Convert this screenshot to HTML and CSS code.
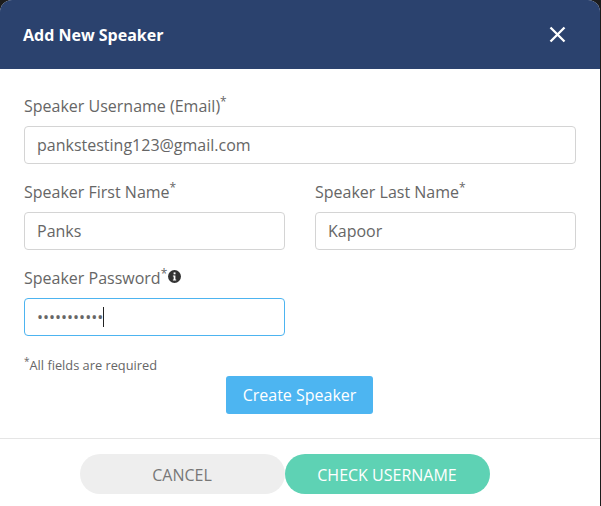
FILE: index.html
```html
<!DOCTYPE html>
<html lang="en">
<head>
    <meta charset="UTF-8">
    <meta name="viewport" content="width=device-width,initial-scale=1.0">
    <title>Add New Speaker</title>
    <link rel="stylesheet" href="styles.css">
</head>
<body>
<div class="modal">
    <div class="modal-head">
        <h1>Add New Speaker</h1>
        <svg class="close" width="17" height="17" viewBox="0 0 17 17" aria-label="Close">
            <path d="M1.5 1.5L15.5 15.5M15.5 1.5L1.5 15.5" stroke="#fff" stroke-width="2.3" fill="none"/>
        </svg>
    </div>
    <form class="modal-body">
        <div class="field">
            <label>Speaker Username (Email)<sup>*</sup></label>
            <input type="text" value="pankstesting123@gmail.com">
        </div>
        <div class="row">
            <div class="field">
                <label>Speaker First Name<sup>*</sup></label>
                <input type="text" value="Panks">
            </div>
            <div class="field">
                <label>Speaker Last Name<sup>*</sup></label>
                <input type="text" value="Kapoor">
            </div>
        </div>
        <div class="row">
            <div class="field">
                <label>Speaker Password<sup>*</sup><svg class="info" width="13" height="13" viewBox="0 0 13 13">
                        <circle cx="6.5" cy="6.5" r="6.5" fill="#333"/>
                        <rect x="5.6" y="2.4" width="1.9" height="1.9" fill="#fff"/>
                        <path d="M4.9 5.4H7.4V9.4H8.2V10.5H4.9V9.4H5.7V6.5H4.9Z" fill="#fff"/>
                    </svg></label>
                <div class="input focused"><span class="dots">•••••••••••</span><span class="caret"></span></div>
            </div>
            <div class="field"></div>
        </div>
        <p class="note"><sup>*</sup>All fields are required</p>
        <button type="button" class="create">Create Speaker</button>
    </form>
    <div class="modal-foot">
        <button type="button" class="pill cancel">CANCEL</button>
        <button type="button" class="pill check">CHECK USERNAME</button>
    </div>
</div>
</body>
</html>
```

FILE: styles.css
```css
* {
    box-sizing: border-box;
}
html, body {
    margin: 0;
    padding: 0;
    height: 100%;
    background: #1c1c1c;
    overflow: hidden;
}
body {
    font-family: "Open Sans", sans-serif;
    color: #666;
}
.modal {
    width: 600px;
    height: 506px;
    background: #fff;
    border-radius: 12px 12px 0 0;
    overflow: hidden;
}
.modal-head {
    height: 69px;
    background: #2b426e;
    display: flex;
    align-items: center;
    justify-content: space-between;
    padding: 0 34px 0 23px;
}
.modal-head h1 {
    margin: 0;
    font-size: 16px;
    font-weight: 700;
    color: #fff;
}
.close {
    display: block;
}
.modal-body {
    padding: 26px 24px 0;
    height: 370px;
    border-bottom: 1px solid #e5e5e5;
}
.row {
    display: flex;
    gap: 30px;
}
.field {
    flex: 1;
    margin-bottom: 17px;
}
label {
    display: block;
    height: 22px;
    margin-bottom: 9px;
    font-size: 16px;
    line-height: 22px;
    white-space: nowrap;
}
sup {
    font-size: 12px;
    line-height: 0;
}
.info {
    margin-left: 1px;
    vertical-align: 1px;
}
input, .input {
    display: flex;
    align-items: center;
    width: 100%;
    height: 38px;
    padding: 0 12px;
    border: 1px solid #d4d4d4;
    border-radius: 4px;
    font-family: inherit;
    font-size: 16px;
    color: #666;
    background: #fff;
    outline: none;
}
.focused {
    border-color: #4db4f0;
}
.caret {
    width: 1px;
    height: 20px;
    background: #222;
}
.note {
    margin: 0;
    height: 23px;
    font-size: 12.8px;
    line-height: 24px;
}
.note sup {
    font-size: 10px;
}
.create {
    display: block;
    width: 147px;
    height: 38px;
    margin: 0 0 0 202px;
    border: none;
    border-radius: 3px;
    background: #4db5f1;
    color: #fff;
    font-family: inherit;
    font-size: 16px;
}
.modal-foot {
    display: flex;
    justify-content: center;
    padding: 15px 31px 0 0;
}
.pill {
    width: 205px;
    height: 40px;
    padding-top: 2px;
    border: none;
    border-radius: 20px;
    font-family: inherit;
    font-size: 16px;
}
.cancel {
    background: #eeeeee;
    color: #777;
}
.check {
    background: #5ed2b4;
    color: #fff;
}
```
